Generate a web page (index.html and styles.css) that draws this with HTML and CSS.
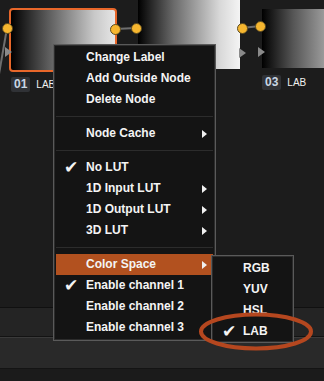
FILE: index.html
```html
<!DOCTYPE html>
<html lang="en">
<head>
    <meta charset="UTF-8">
    <title>Node Menu</title>
    <link rel="stylesheet" href="styles.css">
</head>
<body>
    <div class="screen">
        <div class="graph">
            <svg class="wires" width="324" height="307">
                <line x1="7" y1="28" x2="-2" y2="80" />
                <line x1="115" y1="29" x2="136" y2="28" />
                <line x1="242" y1="28" x2="260" y2="26" />
            </svg>
            <div class="node node-one"></div>
            <div class="node node-two"></div>
            <div class="node node-three"></div>

            <span class="dot" style="left: 2px; top: 23px;"></span>
            <span class="dot" style="left: 110px; top: 24px;"></span>
            <span class="dot" style="left: 131px; top: 23px;"></span>
            <span class="dot" style="left: 237px; top: 23px;"></span>
            <span class="dot" style="left: 255px; top: 21px;"></span>

            <span class="input" style="left: 5px; top: 47px;"></span>
            <span class="input" style="left: 239px; top: 48px;"></span>
            <span class="input" style="left: 258px; top: 47px;"></span>

            <div class="label" style="left: 11px; top: 77px;"><b>01</b><span>LAB</span></div>
            <div class="label" style="left: 262px; top: 75px;"><b>03</b><span>LAB</span></div>
        </div>

        <div class="band band-a"></div>
        <div class="band band-b"></div>
        <div class="band band-c"></div>

        <div class="menu">
            <div class="item">Change Label</div>
            <div class="item">Add Outside Node</div>
            <div class="item">Delete Node</div>
            <div class="sep"></div>
            <div class="item more">Node Cache</div>
            <div class="sep"></div>
            <div class="item checked">No LUT</div>
            <div class="item more">1D Input LUT</div>
            <div class="item more">1D Output LUT</div>
            <div class="item more">3D LUT</div>
            <div class="sep"></div>
            <div class="item more active">Color Space</div>
            <div class="item checked">Enable channel 1</div>
            <div class="item">Enable channel 2</div>
            <div class="item">Enable channel 3</div>
        </div>

        <div class="submenu">
            <div class="item">RGB</div>
            <div class="item">YUV</div>
            <div class="item">HSL</div>
            <div class="item checked">LAB</div>
        </div>

        <svg class="ring" width="324" height="381">
            <ellipse cx="256" cy="331.5" rx="55" ry="17" />
        </svg>
    </div>
</body>
</html>
```

FILE: styles.css
```css
* {
    padding: 0;
    margin: 0;
    box-sizing: border-box;
}

body {
    background-color: #1d1d1d;
    font-family: 'Liberation Sans', Arial, sans-serif;
    overflow: hidden;
}

.screen {
    position: relative;
    width: 324px;
    height: 381px;
    background-color: #1c1c1c;
}

.graph {
    position: relative;
    height: 307px;
}

.wires {
    position: absolute;
    left: 0;
    top: 0;
}

.wires line {
    stroke: #6e6e6e;
    stroke-width: 2;
}

.node {
    position: absolute;
}

.node-one {
    left: 9px;
    top: 8px;
    width: 108px;
    height: 64px;
    border: 2px solid #e8672a;
    border-radius: 4px;
    background: linear-gradient(to right, #000 0%, #5a5a5a 35%, #c8c8c8 80%, #e6e6e6 100%);
}

.node-two {
    left: 138px;
    top: 0;
    width: 102px;
    height: 69px;
    background: linear-gradient(to right, #000 0%, #6a6a6a 35%, #d8d8d8 80%, #f4f4f4 100%);
}

.node-three {
    left: 262px;
    top: 9px;
    width: 62px;
    height: 59px;
    background: linear-gradient(to right, #000 0%, #555 50%, #9a9a9a 100%);
}

.dot {
    position: absolute;
    width: 11px;
    height: 11px;
    border-radius: 50%;
    background: #f6b62f;
    border: 1px solid #5a4a20;
}

.input {
    position: absolute;
    width: 0;
    height: 0;
    border-top: 5px solid transparent;
    border-bottom: 5px solid transparent;
    border-left: 7px solid #8a8a8a;
}

.label {
    position: absolute;
    display: flex;
    align-items: center;
    gap: 6px;
}

.label b {
    background: #303236;
    color: #c9d6e4;
    font-size: 12px;
    border-radius: 2px;
    padding: 1px 3px;
    line-height: 13px;
}

.label span {
    color: #f0f0f0;
    font-size: 10px;
}

.band {
    border-top: 1px solid #101010;
}

.band-a {
    height: 30px;
    background: #242424;
    border-bottom: 1px solid #131313;
}

.band-b {
    height: 32px;
    background: #292929;
    border-top: 1px solid #3a3a3a;
    border-bottom: 1px solid #141414;
}

.band-c {
    height: 11px;
    background: #1b1b1b;
    border-top: none;
}

.menu {
    position: absolute;
    left: 53px;
    top: 44px;
    width: 163px;
    height: 297px;
    background: #141414;
    border: 1px solid #5a5a5a;
    box-shadow: inset 0 0 0 1px #2c2c2c;
    padding: 2px 2px;
}

.item {
    position: relative;
    height: 21px;
    line-height: 21px;
    padding-left: 30px;
    color: #f4f4f4;
    font-size: 12px;
    font-weight: bold;
    white-space: nowrap;
}

.menu .item.active {
    background: #b2511f;
}

.item.checked::before {
    content: "\2714";
    position: absolute;
    left: 8px;
    top: 0;
    font-size: 17px;
    font-weight: normal;
    font-family: 'DejaVu Sans', sans-serif;
}

.item.more::after {
    content: "";
    position: absolute;
    right: 6px;
    top: 7px;
    border-top: 4px solid transparent;
    border-bottom: 4px solid transparent;
    border-left: 5px solid #f0f0f0;
}

.sep {
    height: 1px;
    margin: 6px 0;
    background: #2c2c2c;
}

.submenu {
    position: absolute;
    left: 211px;
    top: 255px;
    width: 83px;
    height: 88px;
    background: #141414;
    border: 1px solid #5a5a5a;
    box-shadow: inset 0 0 0 1px #2c2c2c;
    padding: 2px 2px;
}

.submenu .item {
    padding-left: 29px;
}

.submenu .item.checked::before {
    left: 8px;
}

.ring {
    position: absolute;
    left: 0;
    top: 0;
    pointer-events: none;
}

.ring ellipse {
    fill: none;
    stroke: #b5471f;
    stroke-width: 4;
}
```
